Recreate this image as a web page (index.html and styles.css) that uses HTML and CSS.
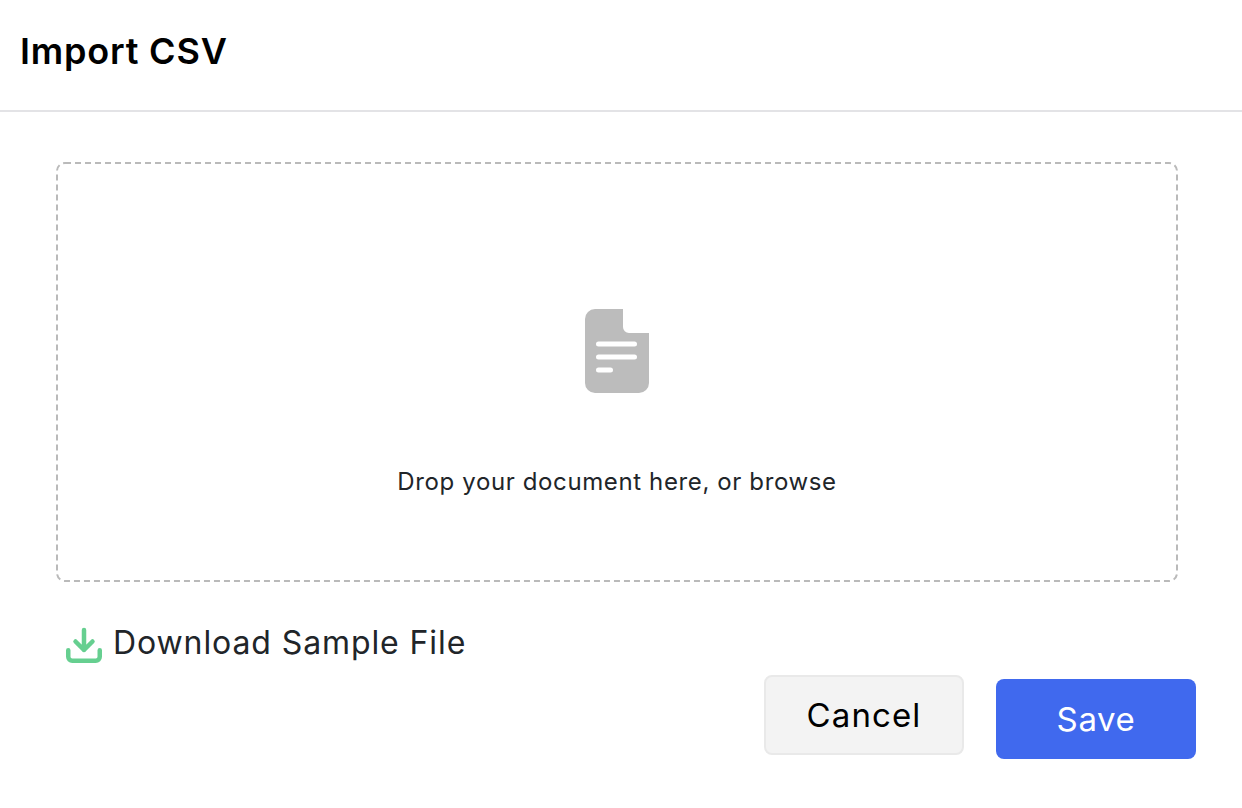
FILE: index.html
```html
<!DOCTYPE html>
<html lang="en">
<head>
  <meta charset="UTF-8" />
  <title>Import CSV</title>
  <link rel="stylesheet" href="styles.css">
</head>
<body>
  <header class="modal-header">
    <h1>Import CSV</h1>
  </header>

  <div class="modal-body">
    <div class="dropzone">
      <svg class="dash-border" width="1122" height="420" viewBox="0 0 1122 420">
        <rect x="1" y="1" width="1120" height="418" rx="8" fill="none" stroke="#bababa" stroke-width="2" stroke-dasharray="6 4"/>
      </svg>
      <svg class="doc-icon" width="64" height="84" viewBox="0 0 64 84">
        <path fill="#bcbcbc" d="M10 0H38V18a6 6 0 0 0 6 6H64V74a10 10 0 0 1-10 10H10A10 10 0 0 1 0 74V10A10 10 0 0 1 10 0Z"/>
        <path fill="none" stroke="#fff" stroke-width="5" stroke-linecap="round" d="M13.500 35H49.500M13.500 48H49.500M13.500 61H25.500"/>
      </svg>
      <p>Drop your document here, or browse</p>
    </div>

    <a class="sample-link" href="#">
      <svg width="38" height="38" viewBox="0 0 38 38">
        <path fill="none" stroke="#66cf90" stroke-width="4.500" stroke-linecap="round" stroke-linejoin="round" d="M19 3.900V24M10.500 15.500L19 24L27.500 15.500M3.250 24.250V30.750a4 4 0 0 0 4 4H30.750a4 4 0 0 0 4-4V24.250"/>
      </svg>
      <span>Download Sample File</span>
    </a>
  </div>

  <div class="modal-actions">
    <button class="btn btn-cancel" type="button">Cancel</button>
    <button class="btn btn-save" type="button">Save</button>
  </div>
</body>
</html>
```

FILE: styles.css
```css
body {
  font-family: Inter, "Open Sans", sans-serif;
  margin: 0;
  padding: 0;
  background: #fff;
  color: #212529;
}
.modal-header {
  box-sizing: border-box;
  border-bottom: 2px solid #e3e3e6;
  height: 112px;
  padding: 29px 20px 0;
}
.modal-header h1 {
  margin: 0;
  font-size: 36px;
  line-height: 44px;
  font-weight: 600;
  letter-spacing: 0.8px;
  color: #000;
}
.modal-body {
  padding: 50px 64px 0 56px;
}
.dropzone {
  position: relative;
  height: 420px;
  box-sizing: border-box;
  display: flex;
  flex-direction: column;
  align-items: center;
  padding-top: 147px;
}
.dash-border {
  position: absolute;
  top: 0;
  left: 0;
}
.dropzone p {
  margin: 74px 0 0;
  font-size: 24px;
  line-height: 30px;
  letter-spacing: 0.62px;
}
.sample-link {
  display: flex;
  align-items: center;
  gap: 10px;
  margin: 44px 0 0 9px;
  height: 38px;
  color: #212529;
  text-decoration: none;
  font-size: 32px;
  letter-spacing: 0.9px;
}
.sample-link span {
  padding-bottom: 6px;
}
.modal-actions {
  display: flex;
  justify-content: flex-end;
  gap: 32px;
  padding-right: 46px;
  margin-top: 11px;
}
.btn {
  width: 200px;
  height: 80px;
  box-sizing: border-box;
  border-radius: 8px;
  font-family: inherit;
  font-size: 33px;
}
.btn-cancel {
  background: #f3f3f3;
  border: 2px solid #e9e9e9;
  color: #000;
  letter-spacing: 1.1px;
}
.btn-save {
  background: #4069ee;
  border: 0;
  color: #fff;
  margin-top: 4px;
  letter-spacing: 0.6px;
}
```
